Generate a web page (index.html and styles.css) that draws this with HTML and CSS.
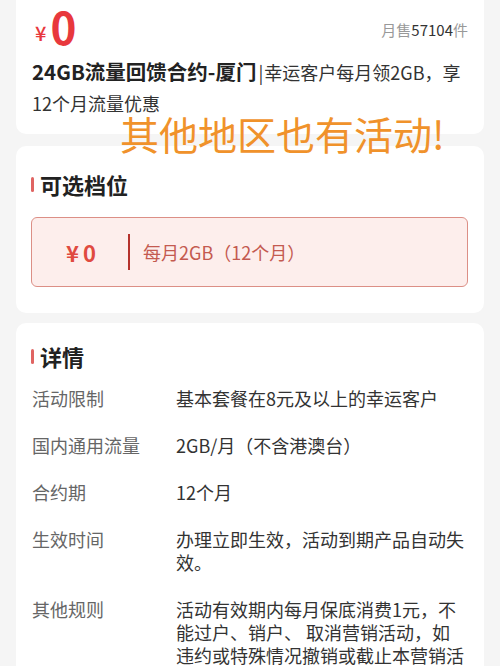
FILE: index.html
```html
<!DOCTYPE html>
<html lang="zh-CN">
<head>
<meta charset="utf-8">
<title>24GB流量回馈合约-厦门</title>
<link rel="stylesheet" href="styles.css">
</head>
<body>
<div class="page">
  <section class="card card-top">
    <div class="price-row">
      <div class="price"><span class="yen">¥</span><span class="amount">0</span></div>
      <div class="sales"><span class="muted">月售</span>57104<span class="muted">件</span></div>
    </div>
    <p class="title"><strong>24GB流量回馈合约-厦门</strong><span class="sep">|</span>幸运客户每月领2GB，享12个月流量优惠</p>
    <div class="overlay">其他地区也有活动!</div>
  </section>

  <section class="card card-option">
    <h2 class="heading">可选档位</h2>
    <div class="option">
      <span class="opt-price"><span class="opt-yen">¥</span>0</span>
      <span class="opt-line"></span>
      <span class="opt-text">每月2GB（12个月）</span>
    </div>
  </section>

  <section class="card card-detail">
    <h2 class="heading">详情</h2>
    <dl class="details">
      <div class="row"><dt>活动限制</dt><dd>基本套餐在8元及以上的幸运客户</dd></div>
      <div class="row"><dt>国内通用流量</dt><dd>2GB/月（不含港澳台）</dd></div>
      <div class="row"><dt>合约期</dt><dd>12个月</dd></div>
      <div class="row"><dt>生效时间</dt><dd>办理立即生效，活动到期产品自动失效。</dd></div>
      <div class="row"><dt>其他规则</dt><dd>活动有效期内每月保底消费1元，不能过户、销户、 取消营销活动，如违约或特殊情况撤销或截止本营销活动的，则需收取违约金30元，若您单月保底消费不足将按差额补收。</dd></div>
    </dl>
  </section>
</div>
</body>
</html>
```

FILE: styles.css
```css
html, body {
  margin: 0;
  padding: 0;
  background: #f5f5f5;
  height: 666px;
  overflow: hidden;
}
body {
  font-family: "Noto Sans CJK SC", "Noto Sans", sans-serif;
  color: #333;
}
.page {
  display: flex;
  flex-direction: column;
  gap: 10px;
  padding: 0 16px;
}
.card {
  background: #fff;
  border-radius: 10px;
  padding: 0 16px;
}
.card-top {
  position: relative;
  margin-top: -12px;
  padding-top: 18px;
  padding-bottom: 15px;
}
.price-row {
  display: flex;
  justify-content: space-between;
  align-items: center;
  height: 40px;
}
.price {
  color: #e8383d;
  font-weight: 700;
  line-height: 1;
  padding-left: 3px;
}
.yen {
  font-size: 20px;
  font-weight: 500;
  vertical-align: 4px;
  margin-right: 4px;
}
.amount {
  font-size: 44px;
}
.sales {
  font-size: 15px;
  color: #333;
  margin-top: 6px;
}
.muted {
  color: #999;
}
.title {
  margin: 10px -8px 0 0;
  font-size: 18px;
  line-height: 31px;
  color: #333;
}
.title strong {
  font-size: 20.5px;
  font-weight: 700;
  color: #222;
}
.sep {
  color: #333;
  margin: 0 1px 0 2px;
}
.overlay {
  position: absolute;
  left: 104px;
  top: 126px;
  font-size: 39px;
  line-height: 1;
  color: #f0922b;
  white-space: nowrap;
}
.heading {
  margin: 0;
  font-size: 22px;
  line-height: 30px;
  font-weight: 700;
  color: #222;
  display: flex;
  align-items: center;
  gap: 6px;
  margin-left: -1px;
}
.heading::before {
  content: "";
  width: 3px;
  height: 15px;
  border-radius: 2px;
  background: #e06462;
}
.card-option {
  margin-top: 2px;
  padding-top: 23px;
  padding-bottom: 26px;
}
.option {
  margin-top: 18px;
  margin-left: -1px;
  height: 68px;
  border: 1px solid #dc8f86;
  border-radius: 6px;
  background: #fdeeec;
  display: flex;
  align-items: center;
  padding-left: 34px;
}
.opt-price {
  width: 62px;
  font-size: 22px;
  font-weight: 700;
  color: #e04a40;
}
.opt-yen {
  margin-right: 4px;
}
.opt-line {
  width: 2px;
  height: 36px;
  background: #b5322c;
}
.opt-text {
  margin-left: 13px;
  font-size: 18px;
  color: #c45a50;
}
.card-detail {
  padding-top: 18px;
  padding-bottom: 20px;
}
.details {
  margin: 16px 0 0;
  display: flex;
  flex-direction: column;
  gap: 24px;
}
.row {
  display: flex;
  font-size: 18px;
  line-height: 23px;
}
.row dt {
  width: 144px;
  flex: none;
  color: #666;
}
.row dd {
  margin: 0;
  flex: 1;
  color: #333;
}
```
